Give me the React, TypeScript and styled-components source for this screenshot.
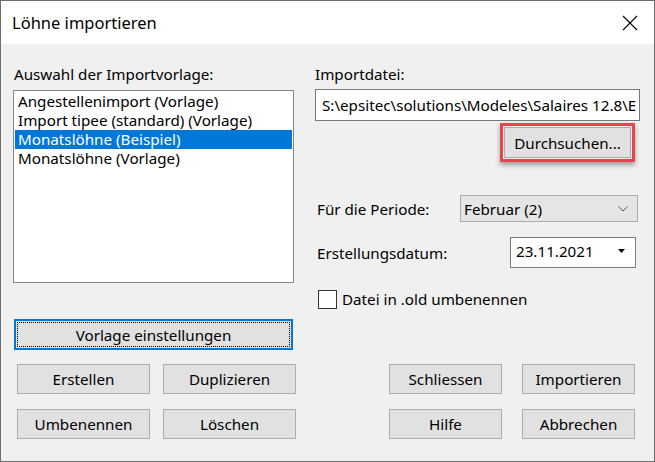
import styled, { createGlobalStyle } from "styled-components";

const GlobalStyle = createGlobalStyle`
  html, body {
    margin: 0;
    padding: 0;
    background: #ffffff;
  }
  * {
    box-sizing: border-box;
  }
`;

const Window = styled.div`
  width: 655px;
  height: 462px;
  border: 1px solid #6e6e6e;
  background: #f0f0f0;
  display: flex;
  flex-direction: column;
  font-family: "Noto Sans", "Open Sans", sans-serif;
  font-size: 15.2px;
  color: #000;
  overflow: hidden;
`;

const TitleBar = styled.div`
  height: 43px;
  flex: none;
  background: #fff;
  display: flex;
  align-items: center;
  justify-content: space-between;
  padding: 0 16px 0 11px;
  font-size: 16.5px;
`;

const Body = styled.div`
  flex: 1;
  padding: 20px 12px 0 12px;
  display: flex;
  flex-direction: column;
`;

const Top = styled.div`
  display: grid;
  grid-template-columns: 281px 1fr;
  column-gap: 20px;
`;

const Column = styled.div`
  display: flex;
  flex-direction: column;
`;

const Label = styled.div<{ $indent?: number }>`
  height: 20px;
  line-height: 20px;
  padding-left: ${(p) => p.$indent ?? 1}px;
  white-space: nowrap;
`;

const ListBox = styled.div`
  margin-top: 6px;
  height: 193px;
  background: #fff;
  border: 1px solid #828790;
  padding: 1px;
`;

const ListItem = styled.div<{ $selected?: boolean }>`
  height: 19px;
  line-height: 19px;
  padding-left: 3px;
  white-space: nowrap;
  background: ${(p) => (p.$selected ? "#0078d7" : "transparent")};
  color: ${(p) => (p.$selected ? "#fff" : "#000")};
`;

const Button = styled.button<{ $width: number }>`
  width: ${(p) => p.$width}px;
  height: 30px;
  background: #e1e1e1;
  border: 1px solid #adadad;
  font: inherit;
  color: #000;
  padding: 0;
  cursor: default;
`;

const FocusButton = styled.button`
  margin: 36px 1px 0 1px;
  height: 31px;
  background: #e1e1e1;
  border: 2px solid #0078d7;
  font: inherit;
  color: #000;
  padding: 1px;
  display: flex;
`;

const FocusInner = styled.span`
  flex: 1;
  border: 1px dotted #000;
  display: flex;
  align-items: center;
  justify-content: center;
`;

const TextInput = styled.div`
  margin: 5px 0 0 1px;
  width: 325px;
  height: 32px;
  background: #fff;
  border: 1px solid #7a7a7a;
  padding-left: 6px;
  line-height: 30px;
  white-space: nowrap;
  overflow: hidden;
`;

const Highlight = styled.div`
  margin: 2px 0 0 186px;
  width: 135px;
  height: 39px;
  border: 3px solid #e8444c;
  box-shadow: 0 3px 5px rgba(0, 0, 0, 0.35);
  padding: 1px;
  display: flex;
`;

const BrowseButton = styled.button`
  flex: 1;
  background: #e1e1e1;
  border: 1px solid #adadad;
  font: inherit;
  color: #000;
  padding: 0;
`;

const FieldRow = styled.div<{ $top: number }>`
  margin-top: ${(p) => p.$top}px;
  display: flex;
  align-items: center;
  justify-content: space-between;
  padding-left: 3px;
`;

const Combo = styled.div`
  width: 178px;
  height: 27px;
  margin-right: 4px;
  background: #e5e5e5;
  border: 1px solid #acacac;
  display: flex;
  align-items: center;
  justify-content: space-between;
  padding: 0 9px 0 3px;
`;

const DateBox = styled.div`
  width: 126px;
  height: 31px;
  margin-right: 6px;
  background: #fff;
  border: 1px solid #7a7a7a;
  display: flex;
  align-items: center;
  justify-content: space-between;
  padding: 0 9px 4px 5px;
`;

const CheckRow = styled.label`
  margin-top: 21px;
  display: flex;
  align-items: center;
  gap: 5px;
  padding-left: 4px;
`;

const CheckBox = styled.span`
  width: 19px;
  height: 19px;
  background: #fff;
  border: 1px solid #333;
`;

const Bottom = styled.div`
  margin-top: 14px;
  display: flex;
  justify-content: space-between;
  padding: 0 7px 0 4px;
`;

const ButtonGrid = styled.div<{ $gap: number }>`
  display: grid;
  grid-template-columns: auto auto;
  column-gap: ${(p) => p.$gap}px;
  row-gap: 15px;
`;

const CloseIcon = () => (
  <svg width="16" height="16" viewBox="0 0 16 16">
    <path d="M1 1 L15 15 M15 1 L1 15" stroke="#000" strokeWidth="1.1" fill="none" />
  </svg>
);

const Chevron = () => (
  <svg width="10" height="6" viewBox="0 0 10 6">
    <path d="M0.5 0.5 L5 5 L9.5 0.5" stroke="#555" strokeWidth="1" fill="none" />
  </svg>
);

const Caret = () => (
  <svg width="8" height="4" viewBox="0 0 8 4">
    <path d="M0 0 H7 L3.5 4 Z" fill="#000" />
  </svg>
);

const templates = [
  "Angestellenimport (Vorlage)",
  "Import tipee (standard) (Vorlage)",
  "Monatslöhne (Beispiel)",
  "Monatslöhne (Vorlage)",
];

export default function App() {
  return (
    <>
      <GlobalStyle />
      <Window>
        <TitleBar>
          <span>Löhne importieren</span>
          <CloseIcon />
        </TitleBar>
        <Body>
          <Top>
            <Column>
              <Label>Auswahl der Importvorlage:</Label>
              <ListBox>
                {templates.map((t, i) => (
                  <ListItem key={t} $selected={i === 2}>
                    {t}
                  </ListItem>
                ))}
              </ListBox>
              <FocusButton>
                <FocusInner>Vorlage einstellungen</FocusInner>
              </FocusButton>
            </Column>
            <Column>
              <Label>Importdatei:</Label>
              <TextInput>{"S:\\epsitec\\solutions\\Modeles\\Salaires 12.8\\E"}</TextInput>
              <Highlight>
                <BrowseButton>Durchsuchen...</BrowseButton>
              </Highlight>
              <FieldRow $top={33}>
                <span>Für die Periode:</span>
                <Combo>
                  <span>Februar (2)</span>
                  <Chevron />
                </Combo>
              </FieldRow>
              <FieldRow $top={15}>
                <span>Erstellungsdatum:</span>
                <DateBox>
                  <span>23.11.2021</span>
                  <Caret />
                </DateBox>
              </FieldRow>
              <CheckRow>
                <CheckBox />
                <span>Datei in .old umbenennen</span>
              </CheckRow>
            </Column>
          </Top>
          <Bottom>
            <ButtonGrid $gap={13}>
              <Button $width={133}>Erstellen</Button>
              <Button $width={133}>Duplizieren</Button>
              <Button $width={133}>Umbenennen</Button>
              <Button $width={133}>Löschen</Button>
            </ButtonGrid>
            <ButtonGrid $gap={20}>
              <Button $width={113}>Schliessen</Button>
              <Button $width={113}>Importieren</Button>
              <Button $width={113}>Hilfe</Button>
              <Button $width={113}>Abbrechen</Button>
            </ButtonGrid>
          </Bottom>
        </Body>
      </Window>
    </>
  );
}
